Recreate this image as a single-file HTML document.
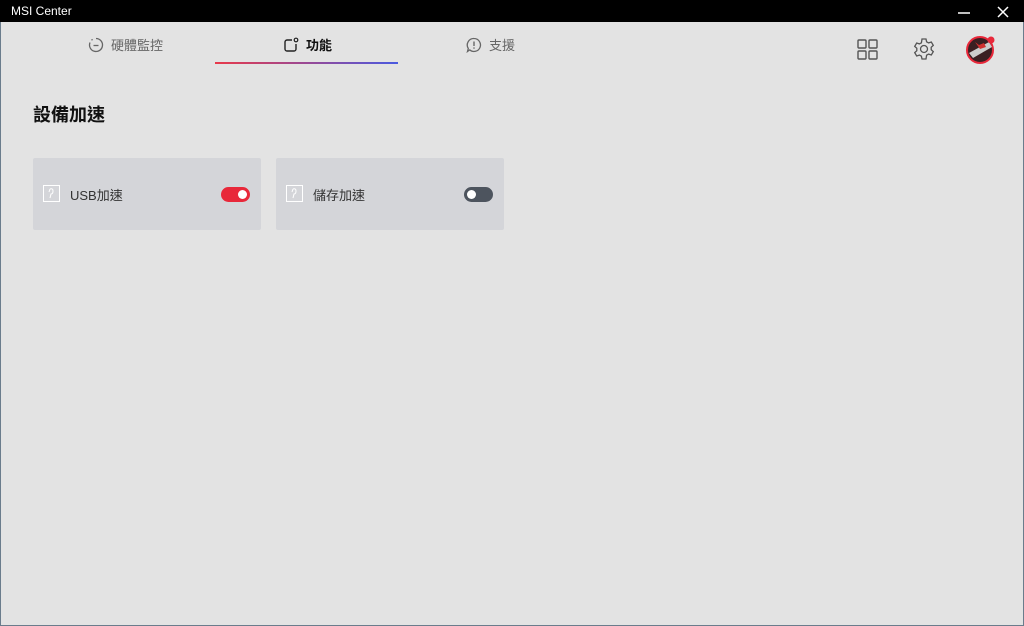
<!DOCTYPE html>
<html><head><meta charset="utf-8"><style>
*{margin:0;padding:0;box-sizing:border-box}
body{width:1024px;height:626px;background:#e3e3e3;font-family:"Liberation Sans","Noto Sans CJK TC",sans-serif;position:relative;overflow:hidden}
.fr{position:absolute;left:0;top:0;width:1024px;height:626px;border:1px solid #6a7c8c;pointer-events:none}
.tb{position:absolute;left:0;top:0;width:1024px;height:22px;background:#000;color:#fff;font-size:12px}
.tb span{position:absolute;left:11px;top:4px}
.tab{position:absolute;top:35px;font-size:13px;color:#666;display:flex;align-items:center;gap:7px}
.card{position:absolute;top:158px;width:228px;height:72px;background:#d4d5d9;border-radius:2px}
.card .lbl{position:absolute;left:37px;top:27px;font-size:13px;color:#333}
.card svg.ic{position:absolute;left:10px;top:27px}
.tg{position:absolute;left:188px;top:29px;width:29px;height:15px;border-radius:8px}
.tg i{position:absolute;top:3px;width:9px;height:9px;border-radius:50%;background:#fff}
</style></head><body>
<div class="fr"></div>
<div class="tb"><span>MSI Center</span>
<svg style="position:absolute;left:958px;top:6px" width="12" height="10"><line x1="0" y1="7" x2="12" y2="7" stroke="#fff" stroke-width="1.5"/></svg>
<svg style="position:absolute;left:997px;top:6px" width="12" height="12"><path d="M1 1L11 11M11 1L1 11" stroke="#fff" stroke-width="1.5"/></svg>
</div>
<div class="tab" style="left:88px"><svg width="16" height="16" viewBox="0 0 16 16"><path d="M8 1.5A6.5 6.5 0 1 1 2 5.5" fill="none" stroke="#666" stroke-width="1.3"/><path d="M3.5 3.2L4.6 2.4" stroke="#666" stroke-width="1.3"/><line x1="5.5" y1="8.5" x2="10.5" y2="8.5" stroke="#666" stroke-width="1.3"/></svg>硬體監控</div>
<div class="tab" style="left:283px;color:#111;font-weight:bold"><svg width="16" height="16" viewBox="0 0 16 16"><path d="M9 3H4a2 2 0 0 0-2 2v7a2 2 0 0 0 2 2h7a2 2 0 0 0 2-2V7" fill="none" stroke="#222" stroke-width="1.4"/><circle cx="13" cy="3" r="1.8" fill="none" stroke="#222" stroke-width="1.2"/></svg>功能</div>
<div style="position:absolute;left:215px;top:62px;width:183px;height:1.5px;background:linear-gradient(90deg,#e8394a,#4a5ae0)"></div>
<div class="tab" style="left:466px"><svg width="16" height="16" viewBox="0 0 16 16"><path d="M8 1.5a6.5 6.5 0 1 1-4.3 11.4L1.5 14.5l.8-3A6.5 6.5 0 0 1 8 1.5z" fill="none" stroke="#666" stroke-width="1.3"/><line x1="8" y1="4.5" x2="8" y2="9" stroke="#666" stroke-width="1.4"/><circle cx="8" cy="11" r=".8" fill="#666"/></svg>支援</div>
<svg style="position:absolute;left:857px;top:39px" width="21" height="21" viewBox="0 0 21 21" fill="none" stroke="#555" stroke-width="1.4"><rect x="1" y="1" width="8" height="8" rx="1"/><rect x="12" y="1" width="8" height="8" rx="1"/><rect x="1" y="12" width="8" height="8" rx="1"/><rect x="12" y="12" width="8" height="8" rx="1"/></svg>
<svg style="position:absolute;left:912px;top:37px" width="24" height="24" viewBox="0 0 24 24" fill="none" stroke="#555" stroke-width="1.3"><path d="M10 2h4l.6 2.8 2 1.1 2.7-.9 2 3.4-2.1 1.9v2.4l2.1 1.9-2 3.4-2.7-.9-2 1.1L14 22h-4l-.6-2.8-2-1.1-2.7.9-2-3.4 2.1-1.9v-2.4L2.7 9.4l2-3.4 2.7.9 2-1.1z"/><circle cx="12" cy="12" r="3.5"/></svg>
<svg style="position:absolute;left:965px;top:34px" width="32" height="32" viewBox="0 0 32 32"><circle cx="15" cy="16" r="13" fill="#3a1f22" stroke="#e8283a" stroke-width="2"/><path d="M4 19L24 8 27 13 8 24z" fill="#ccc"/><path d="M10 8l4 3 5-2 2 4-6 2z" fill="#d03030"/><circle cx="26" cy="6" r="3.5" fill="#e8283a"/></svg>
<div style="position:absolute;left:33px;top:101px;font-size:18px;font-weight:bold;color:#111">設備加速</div>
<div class="card" style="left:33px"><svg class="ic" width="17" height="17" viewBox="0 0 17 17" fill="none" stroke="#fff" stroke-width="1"><rect x=".5" y=".5" width="16" height="16"/><path d="M7 4q3-1 3 2t-2 3l-1 4M7 4l-1 3"/></svg><div class="lbl">USB加速</div><div class="tg" style="background:#e8283a"><i style="left:17px"></i></div></div>
<div class="card" style="left:276px"><svg class="ic" width="17" height="17" viewBox="0 0 17 17" fill="none" stroke="#fff" stroke-width="1"><rect x=".5" y=".5" width="16" height="16"/><path d="M7 4q3-1 3 2t-2 3l-1 4M7 4l-1 3"/></svg><div class="lbl">儲存加速</div><div class="tg" style="background:#4d545e"><i style="left:3px"></i></div></div>
</body></html>
